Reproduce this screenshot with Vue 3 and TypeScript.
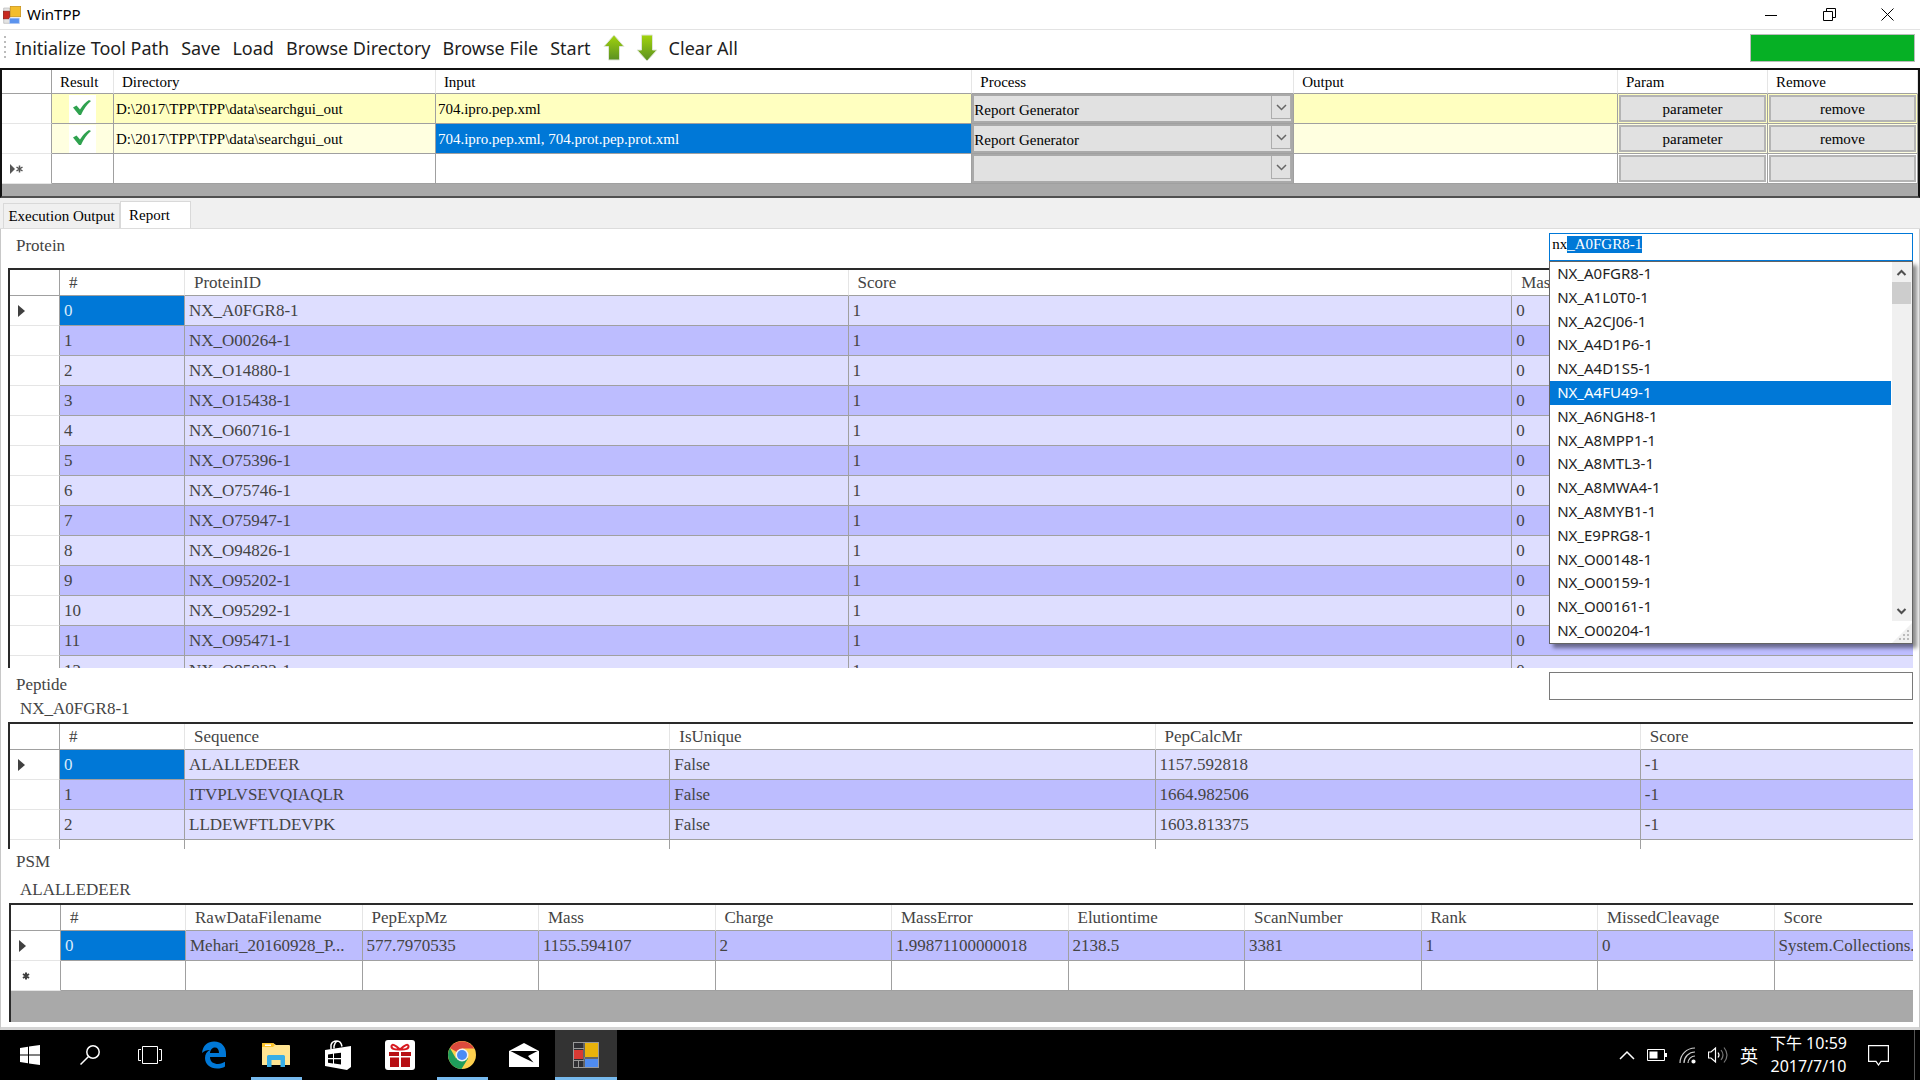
<script setup lang="ts">
import { onMounted, ref } from 'vue'

interface Job {
  done: boolean
  dir: string
  input: string
  process: string
  selected?: boolean
}

interface Grid {
  id: string
  label: string
  sub?: string
  search?: boolean
  columns: string[]
  colWidth: string
  rows: string[][]
  blank?: boolean
}

const jobs: Job[] = [
  { done: true, dir: 'D:\\2017\\TPP\\TPP\\data\\searchgui_out', input: '704.ipro.pep.xml', process: 'Report Generator' },
  { done: true, dir: 'D:\\2017\\TPP\\TPP\\data\\searchgui_out', input: '704.ipro.pep.xml, 704.prot.pep.prot.xml', process: 'Report Generator', selected: true },
  { done: false, dir: '', input: '', process: '' },
]

const proteins = ['A0FGR8', 'O00264', 'O14880', 'O15438', 'O60716', 'O75396', 'O75746', 'O75947', 'O94826', 'O95202', 'O95292', 'O95471', 'O95832']

const grids: Grid[] = [
  {
    id: 'protein',
    label: 'Protein',
    search: true,
    columns: ['ProteinID', 'Score', 'Mass'],
    colWidth: '34.87%',
    rows: proteins.map((p) => [`NX_${p}-1`, '1', '0']),
  },
  {
    id: 'peptide',
    label: 'Peptide',
    sub: 'NX_A0FGR8-1',
    search: true,
    columns: ['Sequence', 'IsUnique', 'PepCalcMr', 'Score'],
    colWidth: '25.5%',
    rows: [
      ['ALALLEDEER', 'False', '1157.592818', '-1'],
      ['ITVPLVSEVQIAQLR', 'False', '1664.982506', '-1'],
      ['LLDEWFTLDEVPK', 'False', '1603.813375', '-1'],
    ],
    blank: true,
  },
  {
    id: 'psm',
    label: 'PSM',
    sub: 'ALALLEDEER',
    columns: ['RawDataFilename', 'PepExpMz', 'Mass', 'Charge', 'MassError', 'Elutiontime', 'ScanNumber', 'Rank', 'MissedCleavage', 'Score'],
    colWidth: '9.28%',
    rows: [['Mehari_20160928_P...', '577.7970535', '1155.594107', '2', '1.99871100000018', '2138.5', '3381', '1', '0', 'System.Collections.']],
    blank: true,
  },
]

const suggestions = ['A0FGR8', 'A1L0T0', 'A2CJ06', 'A4D1P6', 'A4D1S5', 'A4FU49', 'A6NGH8', 'A8MPP1', 'A8MTL3', 'A8MWA4', 'A8MYB1', 'E9PRG8', 'O00148', 'O00159', 'O00161', 'O00204'].map((s) => `NX_${s}-1`)
const highlighted = 5

const queries = ref<Record<string, string>>({ protein: 'nx_A0FGR8-1', peptide: '' })

onMounted(() => {
  const box = document.getElementById('search-protein') as HTMLInputElement | null
  if (box) {
    box.focus()
    box.setSelectionRange(2, box.value.length)
  }
})
</script>

<template>
  <div class="desktop">
    <header class="titlebar">
      <svg class="app-icon" width="18" height="18" viewBox="0 0 26 26">
        <path d="M1 3h9v22H1z" fill="#e4e4e4" stroke="#b5b5b5" />
        <rect x="10.500" y="0.500" width="15" height="15" fill="#f3bd2c" stroke="#c48d14" />
        <rect x="0.500" y="7.500" width="9" height="11" fill="#c8281e" stroke="#8f1a12" />
        <rect x="9.500" y="17.500" width="14" height="8" fill="#5b93ee" stroke="#b8cdf2" />
      </svg>
      <span class="title">WinTPP</span>
      <div class="win-buttons">
        <button type="button" aria-label="Minimize"><svg width="12" height="12"><path d="M0 6.500h12" stroke="#000" /></svg></button>
        <button type="button" aria-label="Restore"><svg width="13" height="13" fill="none" stroke="#000"><path d="M0.500 3.500h9v9h-9zM3.500 3.500v-3h9v9h-3" /></svg></button>
        <button type="button" aria-label="Close"><svg width="13" height="13" stroke="#000"><path d="M0.500 0.500l12 12M12.500 0.500l-12 12" /></svg></button>
      </div>
    </header>

    <nav class="toolbar">
      <span class="grip"></span>
      <button type="button">Initialize Tool Path</button>
      <button type="button">Save</button>
      <button type="button">Load</button>
      <button type="button">Browse Directory</button>
      <button type="button">Browse File</button>
      <button type="button">Start</button>
      <button type="button" class="arrow" aria-label="Move up">
        <svg width="22" height="28" viewBox="0 0 22 28">
          <defs><linearGradient id="leaf" x1="0" y1="0" x2="0" y2="1"><stop offset="0" stop-color="#a2d40c" /><stop offset="1" stop-color="#5a9022" /></linearGradient></defs>
          <path d="M11 1L21 12.500H16.500V26H5.500V12.500H1z" fill="url(#leaf)" stroke="#dfe5d8" stroke-width="1" />
        </svg>
      </button>
      <button type="button" class="arrow" aria-label="Move down">
        <svg width="22" height="28" viewBox="0 0 22 28">
          <path d="M11 27L21 16H16.500V1H5.500V16H1z" fill="url(#leaf)" stroke="#dfe5d8" stroke-width="1" />
        </svg>
      </button>
      <button type="button">Clear All</button>
      <progress class="meter" value="100" max="100" aria-label="Progress"></progress>
    </nav>

    <section class="jobs">
      <table>
        <colgroup>
          <col class="c-mark" /><col class="c-result" /><col class="c-dir" /><col class="c-input" /><col class="c-process" /><col /><col class="c-act" /><col class="c-act" />
        </colgroup>
        <thead>
          <tr><th></th><th>Result</th><th>Directory</th><th>Input</th><th>Process</th><th>Output</th><th>Param</th><th>Remove</th></tr>
        </thead>
        <tbody>
          <tr v-for="(job, i) in jobs" :key="i" :class="{ filled: job.done, light: job.selected }">
            <td class="mark">
              <svg v-if="!job.done" width="14" height="10" viewBox="0 0 14 10"><path d="M0 0l5 5-5 5z" fill="#555" /><path d="M9.500 1.500v7M6.500 3l6 4M6.500 7l6-4" stroke="#555" stroke-width="1.500" /></svg>
            </td>
            <td class="result">
              <span v-if="job.done" class="tick"><svg width="18" height="15" viewBox="0 0 18 15"><path d="M0 7.500L3.500 5.500L7 9.500Q11 3 16 0L18 1Q12 6 8 15H6z" fill="#2fa24f" /></svg></span>
            </td>
            <td>{{ job.dir }}</td>
            <td :class="{ selected: job.selected }">{{ job.input }}</td>
            <td class="tight">
              <div class="combo">
                <select :aria-label="`Process ${i + 1}`"><option>{{ job.process }}</option></select>
                <span class="drop"><svg width="11" height="7" fill="none" stroke="#666" stroke-width="1.500"><path d="M1 1l4.500 4.500L10 1" /></svg></span>
              </div>
            </td>
            <td></td>
            <td class="pad"><button type="button" :aria-label="`Parameter ${i + 1}`">{{ job.done ? 'parameter' : '' }}</button></td>
            <td class="pad"><button type="button" :aria-label="`Remove ${i + 1}`">{{ job.done ? 'remove' : '' }}</button></td>
          </tr>
        </tbody>
      </table>
    </section>

    <div class="tabs" role="tablist">
      <button type="button" role="tab" class="tab">Execution Output</button>
      <button type="button" role="tab" class="tab active" aria-selected="true">Report</button>
    </div>

    <main class="report">
      <section v-for="g in grids" :key="g.id" class="panel" :class="g.id">
        <div class="head">
          <div class="labels">
            <label :for="g.search ? `search-${g.id}` : undefined">{{ g.label }}</label>
            <span v-if="g.sub" class="sub">{{ g.sub }}</span>
          </div>
          <div v-if="g.search" class="search">
            <input :id="`search-${g.id}`" v-model="queries[g.id]" type="text" autocomplete="off" spellcheck="false" />
            <div v-if="g.id === 'protein'" class="popup">
              <ul role="listbox">
                <li v-for="(s, i) in suggestions" :key="s" role="option" :class="{ on: i === highlighted }">{{ s }}</li>
              </ul>
              <div class="scroll">
                <svg width="19" height="20" fill="none" stroke="#505050" stroke-width="2"><path d="M5.500 13l4-4 4 4" /></svg>
                <span class="thumb"></span>
                <svg class="down" width="19" height="20" fill="none" stroke="#505050" stroke-width="2"><path d="M5.500 8l4 4 4-4" /></svg>
                <svg class="corner" width="20" height="22" viewBox="0 0 20 22"><path d="M0 0H20V22H0z" fill="#fff" /><path d="M20 2V22H0z" fill="#f0f0f0" /><path d="M15 9h2v2h-2zM11 13h2v2h-2zM15 13h2v2h-2zM7 17h2v2H7zM11 17h2v2h-2zM15 17h2v2h-2z" fill="#bbb" /></svg>
              </div>
            </div>
          </div>
        </div>
        <div class="frame">
          <table>
            <colgroup>
              <col class="c-mark" /><col class="c-index" />
              <col v-for="(c, i) in g.columns" :key="c" :style="i < g.columns.length - 1 ? { width: g.colWidth } : {}" />
            </colgroup>
            <thead>
              <tr><th></th><th>#</th><th v-for="c in g.columns" :key="c">{{ c }}</th></tr>
            </thead>
            <tbody>
              <tr v-for="(r, i) in g.rows" :key="i" class="data">
                <td class="mark"><svg v-if="i === 0" width="7" height="12"><path d="M0 0l7 6-7 6z" fill="#404040" /></svg></td>
                <td :class="{ selected: i === 0 }">{{ i }}</td>
                <td v-for="(v, j) in r" :key="j">{{ v }}</td>
              </tr>
              <tr v-if="g.blank">
                <td class="mark"><svg v-if="g.id === 'psm'" class="star" width="8" height="8"><path d="M4 0.500v7M1 2l6 4M1 6l6-4" stroke="#404040" stroke-width="2" /></svg></td>
                <td></td>
                <td v-for="c in g.columns" :key="c"></td>
              </tr>
            </tbody>
          </table>
        </div>
      </section>
    </main>

    <footer class="taskbar">
      <button type="button" class="sys" aria-label="Start menu"><svg width="20" height="20" fill="#fff"><path d="M0 3L8 1.800V9.500H0zM9 1.600L20 0V9.500H9zM0 10.500H8V18.200L0 17zM9 10.500H20V20L9 18.400z" /></svg></button>
      <button type="button" class="sys" aria-label="Search"><svg width="20" height="20" fill="none" stroke="#fff" stroke-width="1.500"><circle cx="13" cy="7" r="6.200" /><path d="M8.500 11.500L0.500 19.500" /></svg></button>
      <button type="button" class="sys" aria-label="Task view"><svg width="24" height="20" fill="none" stroke="#fff"><path d="M4.500 1.500h15v17h-15zM3 4.500H0.500v11H3M21 4.500h2.500v11H21" /></svg></button>
      <button type="button" class="app edge" aria-label="Edge"><svg width="26" height="28" viewBox="0 0 26 28"><path d="M1 12C2 4 7 0.500 13 0.500C21 0.500 25 6 25 13V16H9C9 21 13 23 17 23C20 23 22 22 24 20.800V25.500C22 27 19 27.500 16 27.500C9 27.500 4 23 4 17C4 13 6 10.500 9 9C5.500 9 3 10 1 12zM9 12H18C18 8.500 16.500 6.500 14 6.500C11 6.500 9.300 9 9 12z" fill="#0078d7" fill-rule="evenodd" /></svg></button>
      <button type="button" class="app open" aria-label="Explorer"><svg width="28" height="26" viewBox="0 0 28 26"><path d="M0 2Q0 1 1 1H11L14 3H27Q28 3 28 4V23H0z" fill="#ffe492" /><path d="M0 2Q0 1 1 1H11L13 3L11 5H0z" fill="#fcc42c" /><path d="M3 2.500h6v1.500H3z" fill="#fff" /><path d="M5 25V14.500Q5 13 6.500 13H21.500Q23 13 23 14.500V25H18.500V18H9.500V25z" fill="#38aee6" /></svg></button>
      <button type="button" class="app" aria-label="Store"><svg width="26" height="30" viewBox="0 0 26 30"><path d="M0 10L26 6V27L22 30L0 26z" fill="#fff" /><path d="M6 9V5Q7 1 12 1Q16 1 17 6.500M9 8.500V6Q10 2.500 12 1" fill="none" stroke="#fff" stroke-width="1.500" /><path d="M3 14.500L8 13.800V18H3zM9 13.600L16 12.700V18H9zM3 19.200H8V23.500L3 22.800zM9 19.200H16V24.600L9 23.600z" fill="#000" /></svg></button>
      <button type="button" class="app" aria-label="Gifts"><svg width="30" height="30" viewBox="0 0 30 30"><rect width="30" height="30" rx="3" fill="#fff" /><path d="M4 12h10v4H4zM16 12h10v4H16zM5 17.500h9V27H5zM16 17.500h9V27H16z" fill="#b80f14" /><path d="M15 9.500Q6 10 6.500 6Q7.500 2.500 15 9.500Q22.500 2.500 23.500 6Q24 10 15 9.500z" fill="none" stroke="#d81920" stroke-width="2" /></svg></button>
      <button type="button" class="app open" aria-label="Chrome"><svg width="28" height="28" viewBox="0 0 28 28"><circle cx="14" cy="14" r="14" fill="#fdd04e" /><path d="M14 14L1.900 7A14 14 0 0 1 26.100 7.500H14z" fill="#dc4a3d" /><path d="M1.900 7A14 14 0 0 0 13.500 28L20 17.500L14 14L8 17.500z" fill="#1f9d5b" /><circle cx="14" cy="14" r="6.500" fill="#f1f1f1" /><circle cx="14" cy="14" r="5" fill="#4b8bf5" /></svg></button>
      <button type="button" class="app" aria-label="Mail"><svg width="30" height="24" viewBox="0 0 30 24"><path d="M0 8L15 0L30 8V24H0z" fill="#fff" /><path d="M1.500 8H28.500L19 13L24.500 19.500L12 13.500z" fill="#000" /></svg></button>
      <button type="button" class="app current" aria-label="WinTPP"><svg width="26" height="26" viewBox="0 0 26 26"><rect x="0.500" y="0.500" width="25" height="25" fill="#2f2f33" stroke="#999" /><path d="M0 6.500h11M0 18.500h11M5.500 18v8M11 0v26M11 16h15" stroke="#999" /><rect x="12" y="1" width="13" height="14" fill="#e8b20c" /><rect x="1" y="8" width="9" height="9" fill="#d83a34" /><rect x="12" y="17" width="13" height="8" fill="#4f8bf0" /></svg></button>
      <div class="tray">
        <svg width="16" height="10" fill="none" stroke="#fff" stroke-width="1.500"><path d="M1 9l7-7 7 7" /></svg>
        <svg width="20" height="12"><path d="M0.500 0.500h17v11h-17z" fill="none" stroke="#fff" /><path d="M2.500 2.500h8v7h-8zM18 4h2v4h-2z" fill="#fff" /></svg>
        <svg width="17" height="17" fill="none" stroke="#fff" stroke-width="1.200"><path d="M1 16A15 15 0 0 1 16 1M5 16A11 11 0 0 1 16 5M9 16A7 7 0 0 1 16 9" stroke="#ccc" /><circle cx="14.500" cy="14.500" r="1.500" fill="#fff" /></svg>
        <svg width="20" height="18" fill="none" stroke="#fff" stroke-width="1.200"><path d="M0.500 6H3L7.500 2V16L3 12H0.500z" /><path d="M10 6.500Q12 9 10 11.500" /><path d="M13 4Q17 9 13 14M16 1.500Q22 9 16 16.500" stroke="#777" /></svg>
        <span class="ime">英</span>
        <time class="clock"><span>下午 10:59</span><span>2017/7/10</span></time>
        <svg width="21" height="21" fill="none" stroke="#fff" stroke-width="1.200"><path d="M0.600 0.600H20.400V16.400H13L10.500 20L8 16.400H0.600z" /></svg>
      </div>
    </footer>
  </div>
</template>

<style>
body {
  margin: 0;
  background: #fff;
}
</style>

<style scoped>
* {
  box-sizing: border-box;
}
.desktop {
  display: flex;
  flex-direction: column;
  height: 100vh;
  overflow: hidden;
  background: #fff;
  color: #000;
  font-family: 'Liberation Serif', 'Noto Sans CJK TC', serif;
  font-size: 15px;
}
button,
input,
select {
  font: inherit;
  color: inherit;
  border: 0;
  border-radius: 0;
  margin: 0;
  padding: 0;
  background: none;
  outline: none;
}
svg {
  display: block;
  flex: none;
}

/* window chrome */
.titlebar {
  display: flex;
  align-items: center;
  flex: none;
  height: 29px;
  padding-left: 3px;
  gap: 6px;
}
.title {
  padding-bottom: 2px;
  font: 15px 'Noto Sans', sans-serif;
}
.win-buttons {
  display: flex;
  margin-left: auto;
  padding-right: 4px;
}
.win-buttons button {
  display: flex;
  align-items: center;
  justify-content: center;
  width: 58px;
  height: 28px;
}
.toolbar {
  display: flex;
  align-items: center;
  flex: none;
  height: 39px;
  padding: 0 5px 3px 4px;
  border-top: 1px solid #e3e3e3;
  font: 18px 'Noto Sans', sans-serif;
  color: #1e1e1e;
}
.toolbar button {
  margin-right: 12px;
  white-space: nowrap;
}
.toolbar .arrow {
  margin-right: 11px;
}
.grip {
  width: 2px;
  height: 24px;
  margin-right: 9px;
  background: repeating-linear-gradient(#bbb 0 2px, transparent 2px 5px);
}
.meter {
  appearance: none;
  width: 165px;
  height: 28px;
  margin-left: auto;
  border: 1px solid #bcbcbc;
}
.meter::-webkit-progress-bar {
  background: #e6e6e6;
}
.meter::-webkit-progress-value {
  background: #06b025;
}

/* shared grid rules */
table {
  width: 100%;
  table-layout: fixed;
  border-collapse: separate;
  border-spacing: 0;
}
th,
td {
  padding: 0 0 0 3px;
  border-right: 1px solid #a0a0a0;
  border-bottom: 1px solid #a0a0a0;
  background: #fff;
  text-align: left;
  font-weight: normal;
  white-space: nowrap;
  overflow: hidden;
}
th {
  height: 26px;
  padding-left: 9px;
  border-right-color: #e5e5e5;
  line-height: 24px;
}
td {
  height: 30px;
  padding-left: 4px;
  line-height: 29px;
}
th:first-child {
  border-right-color: #a0a0a0;
}
.mark {
  padding-left: 8px;
  border-bottom-color: #e5e5e5;
  border-right-color: #a0a0a0;
}
.c-mark {
  width: 50px;
}
td.selected {
  background: #0078d7;
  color: #fff;
}

/* job list */
.jobs {
  flex: none;
  height: 130px;
  border: 2px solid #111;
  border-bottom-color: #505050;
  background: #a9a9a9;
}
.jobs th {
  height: 24px;
  padding-left: 8px;
  line-height: 22px;
}
.jobs td {
  padding-left: 2px;
  line-height: 28px;
}
.jobs .mark {
  padding-left: 8px;
}
.c-result {
  width: 62px;
}
.c-dir,
.c-process {
  width: 16.8%;
}
.c-input {
  width: 28%;
}
.c-act {
  width: 150px;
}
.filled td:not(.mark) {
  background: #ffffc0;
}
.light td:not(.mark) {
  background: #ffffe0;
}
.filled td.selected:not(.mark) {
  background: #0078d7;
}
.jobs .result {
  padding: 0;
}
.tick {
  display: flex;
  justify-content: center;
  width: 27px;
  height: 28px;
  margin: 0 auto;
  padding: 5px 2px 0 0;
  background: #fff;
}
.jobs .tight {
  padding: 0;
}
.combo {
  display: flex;
  height: 29px;
  border: 2px solid #a9a9a9;
  background: #e1e1e1;
}
.combo select {
  appearance: none;
  flex: 1;
  min-width: 0;
  padding-bottom: 2px;
  background: #e1e1e1;
}
.drop {
  display: flex;
  align-items: center;
  justify-content: center;
  width: 20px;
  height: 23px;
  border: 1px solid #adadad;
  border-top: 0;
}
.jobs .pad {
  padding: 1px;
}
.pad button {
  display: block;
  width: 100%;
  height: 27px;
  border: 2px solid #b4b4b4;
  background: #e1e1e1;
  line-height: 22px;
}

/* tabs */
.tabs {
  display: flex;
  align-items: flex-end;
  flex: none;
  height: 31px;
  padding-left: 3px;
  border-bottom: 1px solid #dcdcdc;
  background: #f0f0f0;
}
.tab {
  width: 117px;
  height: 25px;
  border: 1px solid #d9d9d9;
  border-bottom: 0;
  font-size: 15px;
  white-space: nowrap;
}
.tab.active {
  width: 71px;
  height: 27px;
  padding-right: 12px;
  background: #fff;
}

/* report page */
.report {
  display: flex;
  flex-direction: column;
  flex: 1;
  min-height: 0;
  padding: 0 6px 5px 7px;
  border: 1px solid #c8c8c8;
  border-top: 0;
  border-bottom: 3px solid #d4d4d4;
  font-size: 17px;
  color: #444;
}
.panel {
  display: flex;
  flex-direction: column;
  flex: none;
}
.panel.protein {
  flex: 1;
  min-height: 0;
}
.head {
  display: flex;
  justify-content: space-between;
  flex: none;
  height: 54px;
  padding-top: 4px;
}
.protein .head {
  height: 39px;
}
.psm .head {
  padding-top: 0;
}
.labels {
  display: flex;
  flex-direction: column;
  padding-left: 8px;
  line-height: 26px;
}
.psm .labels {
  gap: 4px;
}
.sub {
  padding-left: 4px;
  line-height: 22px;
}
.search {
  position: relative;
  width: 19.1%;
  height: 28px;
}
.search input {
  display: block;
  width: 100%;
  height: 28px;
  padding: 0 2px 6px;
  border: 1px solid #7a7a7a;
  background: #fff;
  color: #000;
  font-size: 15px;
}
.protein .search input {
  border-color: #0078d7;
}
.search input::selection {
  background: #0078d7;
  color: #fff;
}
.popup {
  position: absolute;
  top: 100%;
  left: 0;
  z-index: 2;
  display: flex;
  width: 100%;
  height: 383px;
  border: 1px solid #646464;
  background: #fff;
  box-shadow: 4px 4px 4px rgba(0, 0, 0, 0.45);
  font: 15px 'Noto Sans', sans-serif;
  color: #1e1e1e;
}
.popup ul {
  display: flex;
  flex-direction: column;
  flex: 1;
  margin: 0 1px 0 0;
  padding: 0;
  list-style: none;
}
.popup li {
  display: flex;
  align-items: center;
  flex: 1;
  padding: 0 0 2px 7px;
}
.popup li.on {
  background: #0078d7;
  color: #fff;
}
.scroll {
  display: flex;
  flex-direction: column;
  width: 20px;
  background: #f0f0f0;
}
.thumb {
  width: 19px;
  height: 22px;
  background: #cdcdcd;
}
.down {
  margin-top: auto;
}
.frame {
  flex: none;
  overflow: hidden;
  border-top: 2px solid #2a2a2a;
  border-left: 2px solid #2a2a2a;
}
.frame tr > :last-child {
  border-right: 0;
}
.protein .frame {
  flex: 1;
  min-height: 0;
}
.peptide .frame {
  height: 127px;
}
.psm .frame {
  height: 119px;
  margin-left: 1px;
  background: #a9a9a9;
}
.c-index {
  width: 125px;
}
.data td:not(.mark) {
  background: #dedeff;
}
.data:nth-child(even) td:not(.mark),
.psm .data td:not(.mark) {
  background: #bdbdff;
}
.data td.selected:not(.mark) {
  background: #0078d7;
  color: #d8ebfa;
}
.star {
  margin-left: 3px;
}

/* taskbar */
.taskbar {
  display: flex;
  align-items: stretch;
  flex: none;
  height: 50px;
  background: #000;
  color: #fff;
}
.taskbar button {
  position: relative;
  display: flex;
  align-items: center;
  justify-content: center;
}
.sys {
  width: 60px;
}
.app {
  width: 62px;
}
.edge {
  margin-left: 3px;
}
.open::after,
.current::after {
  content: '';
  position: absolute;
  bottom: 0;
  left: 6px;
  right: 5px;
  height: 3px;
  background: #76b9ed;
}
.current {
  background: #333;
}
.current::after {
  left: 0;
  right: 0;
}
.tray {
  display: flex;
  align-items: center;
  gap: 12px;
  margin-left: auto;
  margin-right: 5px;
  padding-right: 25px;
  border-right: 1px solid #555;
}
.ime {
  font: 18px 'Noto Sans CJK TC', sans-serif;
}
.clock {
  display: flex;
  flex-direction: column;
  align-items: center;
  margin-right: 9px;
  font: 16px/23px 'Noto Sans', 'Noto Sans CJK TC', sans-serif;
}
</style>
